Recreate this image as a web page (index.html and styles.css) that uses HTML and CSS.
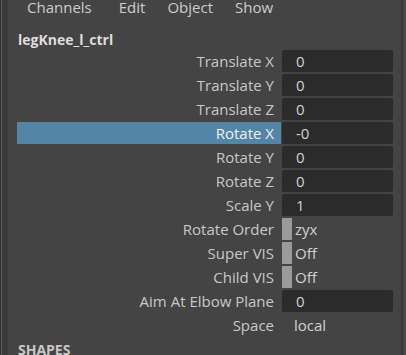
FILE: index.html
```html
<!DOCTYPE html>
<html lang="en">
<head>
    <meta charset="UTF-8">
    <meta name="viewport" content="width=device-width, initial-scale=1.0">
    <title>Channel Box</title>
    <link rel="stylesheet" href="styles.css">
</head>
<body>
    <div class="window">
        <div class="edge-left"></div>
        <div class="channel-box">
            <div class="menubar">
                <span class="menu-item">Channels</span>
                <span class="menu-item">Edit</span>
                <span class="menu-item">Object</span>
                <span class="menu-item">Show</span>
            </div>
            <div class="node-name">legKnee_l_ctrl</div>
            <div class="channels">
                <div class="row"><div class="label">Translate X</div><div class="field">0</div></div>
                <div class="row"><div class="label">Translate Y</div><div class="field">0</div></div>
                <div class="row"><div class="label">Translate Z</div><div class="field">0</div></div>
                <div class="row selected"><div class="label">Rotate X</div><div class="field">-0</div></div>
                <div class="row"><div class="label">Rotate Y</div><div class="field">0</div></div>
                <div class="row"><div class="label">Rotate Z</div><div class="field">0</div></div>
                <div class="row"><div class="label">Scale Y</div><div class="field">1</div></div>
                <div class="row"><div class="label">Rotate Order</div><div class="enum"><span class="swatch"></span>zyx</div></div>
                <div class="row"><div class="label">Super VIS</div><div class="enum"><span class="swatch"></span>Off</div></div>
                <div class="row"><div class="label">Child VIS</div><div class="enum"><span class="swatch"></span>Off</div></div>
                <div class="row"><div class="label">Aim At Elbow Plane</div><div class="field">0</div></div>
                <div class="row"><div class="label">Space</div><div class="plain">local</div></div>
            </div>
            <div class="section">SHAPES</div>
        </div>
        <div class="edge-right"></div>
    </div>
</body>
</html>
```

FILE: styles.css
```css
body {
    margin: 0;
    background-color: #444444;
    font-family: 'Open Sans', 'Noto Sans', sans-serif;
    color: #c8c8c8;
    overflow: hidden;
}
.window {
    display: flex;
    height: 355px;
    overflow: hidden;
}
.edge-left {
    width: 8px;
    flex: none;
    background: linear-gradient(to right, #333 0, #333 1px, #5a5a5a 1px, #5a5a5a 2px, #3b3b3b 2px);
}
.edge-right {
    width: 5px;
    flex: none;
    background: linear-gradient(to right, #3a3a3a 0, #3a3a3a 2px, #484848 2px);
}
.channel-box {
    flex: 1;
}
.menubar {
    display: flex;
    height: 20px;
    margin-top: -5px;
    font-size: 15px;
    line-height: 24px;
    color: #cccccc;
}
.menu-item:nth-child(1) { margin-left: 19px; }
.menu-item:nth-child(2) { margin-left: 27px; }
.menu-item:nth-child(3) { margin-left: 22px; }
.menu-item:nth-child(4) { margin-left: 22px; }
.node-name {
    margin: 15px 0 0 10px;
    height: 20px;
    font-size: 14px;
    font-weight: bold;
    line-height: 20px;
    color: #dddddd;
}
.channels {
    display: flex;
    flex-direction: column;
    gap: 2px;
    padding-left: 9px;
}
.row {
    display: flex;
    height: 22px;
    font-size: 15px;
    line-height: 22px;
}
.label {
    width: 264px;
    padding-right: 7px;
    box-sizing: border-box;
    text-align: right;
    color: #c8c8c8;
}
.row.selected .label {
    background-color: #5285a6;
    color: #f0f0f0;
}
.field {
    width: 111px;
    margin-left: 1px;
    padding-left: 14px;
    box-sizing: border-box;
    background-color: #2b2b2b;
    border-radius: 2px;
    color: #d0d0d0;
}
.enum {
    display: flex;
    margin-left: 1px;
    color: #d0d0d0;
}
.swatch {
    width: 10px;
    height: 22px;
    margin-right: 3px;
    background-color: #9a9a9a;
}
.plain {
    margin-left: 13px;
    color: #d0d0d0;
}
.section {
    margin: 4px 0 0 10px;
    font-size: 14px;
    font-weight: bold;
    line-height: 20px;
    color: #c8c8c8;
}
```
